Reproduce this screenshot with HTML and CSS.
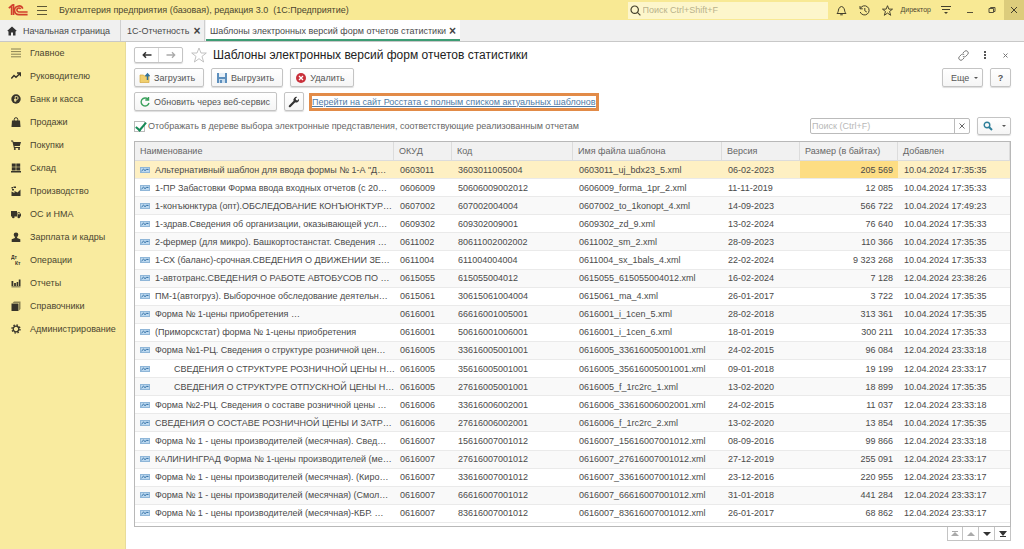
FILE: index.html
```html
<!DOCTYPE html>
<html lang="ru">
<head>
<meta charset="utf-8">
<title>Шаблоны электронных версий форм отчетов статистики</title>
<link rel="stylesheet" href="styles.css">
</head>
<body>
<svg class="sprite" aria-hidden="true">
  <symbol id="doc" viewBox="0 0 10 6"><rect x=".5" y=".5" width="9" height="5" fill="#b9d6ee" stroke="#8fb6d8"/><path d="M1.5 4 3.5 2.2 5 3.6 6.5 2.4H8.5" fill="none" stroke="#2e6da4"/></symbol>
</svg>
<div class="app">
  <header class="topbar">
    <svg class="logo" viewBox="0 0 20 12" fill="none" stroke="#d1402c" stroke-width="1.6"><path d="M.8 4.2 3.6 1.8V11M5.6 11V.8L3.4 1.6"/><path d="M14.8 4.6A4.3 4.3 0 1 0 10.8 10.6H19.6"/><path d="M12.6 5A2 2 0 1 0 10.8 8H19.6"/></svg>
    <button class="plain" aria-label="Меню"><svg width="10" height="10" viewBox="0 0 10 10" stroke="#5d5737" ><path d="M0 1.5H10M0 5.5H10M0 9.5H10"/></svg></button>
    <span class="apptitle">Бухгалтерия предприятия (базовая), редакция 3.0&nbsp; (1С:Предприятие)</span>
    <label class="global"><svg width="11" height="11" viewBox="0 0 11 11" fill="none" stroke="#44402c" stroke-width="1.2"><circle cx="4.7" cy="4.7" r="3.7"/><path d="M7.4 7.4 10.4 10.4"/></svg><input type="text" placeholder="Поиск Ctrl+Shift+F" aria-label="Глобальный поиск"></label>
    <div class="topicons">
      <button class="plain" aria-label="Уведомления"><svg width="11" height="11" viewBox="0 0 11 11" fill="none" stroke="#44402c"><path d="M1 8.5C2.5 7 2.2 5.5 2.8 3.8Q3.6 1.8 5.5 1.5 7.4 1.8 8.2 3.8C8.8 5.5 8.500 7 10 8.500ZM4.200 9.800H6.800"/></svg></button>
      <button class="plain" aria-label="История"><svg width="11" height="11" viewBox="0 0 11 11" fill="none" stroke="#44402c"><path d="M1.300 3.500A4.600 4.600 0 1 1 1.200 7M1 1V3.800H3.800M5.800 3V5.800L7.800 7"/></svg></button>
      <button class="plain" aria-label="Избранное"><svg width="11" height="11" viewBox="0 0 16 16" fill="none" stroke="#44402c" stroke-width="1.400"><path d="M8 1 10 6H15.300L11 9.400 12.600 15 8 11.700 3.400 15 5 9.400.700 6H6Z"/></svg></button>
      <button class="plain user">Директор</button>
      <button class="plain" aria-label="Настройки"><svg width="10" height="10" viewBox="0 0 10 10" stroke="#44402c"><path d="M0 1.500H10M1 4.500H9"/><path d="M3 7H7L5 9Z" fill="#44402c" stroke="none"/></svg></button>
    </div>
    <div class="win">
      <button class="plain" aria-label="Свернуть"><svg width="8" height="8" viewBox="0 0 8 8" stroke="#55503a"><path d="M1 6.500H7"/></svg></button>
      <button class="plain" aria-label="Развернуть"><svg width="8" height="8" viewBox="0 0 8 8" fill="none" stroke="#55503a"><path d="M1 2.500H5.500V6.500H1ZM2.500 2.500V1.500H7V5.500H5.500"/></svg></button>
      <button class="plain close" aria-label="Закрыть"><svg width="8" height="8" viewBox="0 0 8 8" stroke="#44402c"><path d="M1 1 7 7M7 1 1 7"/></svg></button>
    </div>
  </header>
  <nav class="tabs">
    <a class="tab home" href="#"><svg width="10" height="10" viewBox="0 0 10 10" fill="#333"><path d="M5 .5 .3 4.800 1.500 5.400V9.500H4V6.500H6V9.500H8.500V5.400L9.700 4.800Z"/></svg>Начальная страница</a>
    <a class="tab report" href="#">1С-Отчетность<b>×</b></a>
    <a class="tab active" href="#">Шаблоны электронных версий форм отчетов статистики<b>×</b></a>
  </nav>
  <div class="body">
    <nav class="side">
      <a href="#"><svg viewBox="0 0 10 10" stroke="#6b6440" stroke-width=".8"><path d="M0 1H10M0 3.600H10M0 6.200H10M0 8.800H10"/></svg>Главное</a>
      <a href="#"><svg viewBox="0 0 10 10" fill="none" stroke="#37342a" stroke-width="1.500"><path d="M.3 7.500 3 4.500 5 6.300 9 2.500M6 2H9.500V5.300"/></svg>Руководителю</a>
      <a href="#"><svg viewBox="0 0 10 10"><circle cx="5" cy="5" r="4.700" fill="#37342a"/><path d="M4.200 8V2.500H5.600A1.500 1.500 0 0 1 5.600 5.500H3M3 6.700H5.600" fill="none" stroke="#f9eb9f" stroke-width=".9"/></svg>Банк и касса</a>
      <a href="#"><svg viewBox="0 0 10 10" fill="#37342a"><path d="M1 3.500H9L9.500 10H.5Z"/><path d="M3.200 5V2.500Q3.200.7 5 .7T6.800 2.500V5" fill="none" stroke="#37342a"/></svg>Продажи</a>
      <a href="#"><svg viewBox="0 0 10 10" fill="#37342a"><path d="M0 .6H2L2.500 2H10L8.800 6H3.500L3.700 7H9V8H2.900L1.400 1.500H0Z"/><circle cx="3.800" cy="9" r="1"/><circle cx="8" cy="9" r="1"/></svg>Покупки</a>
      <a href="#"><svg viewBox="0 0 10 10" fill="#37342a"><path d="M.8.500H4.700V3.700H.8ZM5.300.500H9.200V3.700H5.300ZM.8 4.300H4.700V7.500H.8ZM5.300 4.300H9.200V7.500H5.300ZM0 8H10V9.500H0Z"/></svg>Склад</a>
      <a href="#"><svg viewBox="0 0 10 10" fill="#37342a"><path d="M.5 10V5.500L3.500 7V5L6.500 6.500 9.500 3.500V10ZM.5 1H2V2.500H.5ZM2.500.5H5V2H2.500ZM1 3H3V4.500H1Z"/></svg>Производство</a>
      <a href="#"><svg viewBox="0 0 10 10" fill="#37342a"><path d="M0 2H6V7.500H0ZM6.500 3.300H8.600L10 5.300V7.500H6.500Z"/><circle cx="2.300" cy="8" r="1.300"/><circle cx="7.800" cy="8" r="1.300"/><path d="M7.200 4H8.300L9 5.200H7.200Z" fill="#f9eb9f"/></svg>ОС и НМА</a>
      <a href="#"><svg viewBox="0 0 10 10" fill="#37342a"><circle cx="5" cy="2.700" r="2.300"/><path d="M3.900 4.500H6.100V6L9.300 7.300V10H.7V7.300L3.900 6Z"/></svg>Зарплата и кадры</a>
      <a href="#"><svg viewBox="0 0 10 10" fill="#37342a"><text x="0" y="4.200" class="dt">Дт</text><text x="4" y="9.800" class="dt">Кт</text></svg>Операции</a>
      <a href="#"><svg viewBox="0 0 10 10" fill="#37342a"><path d="M.5 3H2.300V8H.5ZM3.100 5H4.900V8H3.100ZM5.600 4H7.200V8H5.600ZM7.800 1.500H9.500V8H7.800ZM.5 8.500H9.500V9.300H.5Z"/></svg>Отчеты</a>
      <a href="#"><svg viewBox="0 0 10 10"><path d="M3 .5H9.500V8L8 9.500V2H1.500Z" fill="#8b8355"/><path d="M.5 2.500H7.500V10H.5Z" fill="#37342a"/></svg>Справочники</a>
      <a href="#"><svg viewBox="0 0 10 10" fill="none" stroke="#37342a"><circle cx="5" cy="5" r="2.800" stroke-width="1.300"/><circle cx="5" cy="5" r="4" stroke-width="1.400" stroke-dasharray="1.500 1.640"/></svg>Администрирование</a>
    </nav>
    <main class="main">
      <div class="row head">
        <div class="navpair"><button aria-label="Назад"><svg width="10" height="8" viewBox="0 0 10 8" fill="none" stroke="#333" stroke-width="1.500"><path d="M9.500 4H1.500M4 1.300 1.300 4 4 6.700"/></svg></button><button aria-label="Вперед"><svg width="10" height="8" viewBox="0 0 10 8" fill="none" stroke="#aaa" stroke-width="1.300"><path d="M.5 4H8.500M6 1.300 8.700 4 6 6.700"/></svg></button></div>
        <button class="plain" aria-label="В избранное"><svg width="16" height="16" viewBox="0 0 16 16" fill="none" stroke="#bbb" stroke-width=".9"><path d="M8 1 10 6H15.300L11 9.400 12.600 15 8 11.700 3.400 15 5 9.400.700 6H6Z"/></svg></button>
        <h1>Шаблоны электронных версий форм отчетов статистики</h1>
        <div class="headicons">
          <button class="plain" aria-label="Ссылка"><svg width="11" height="11" viewBox="0 0 11 11" fill="none" stroke="#777"><path d="M5 3 6.500 1.400A2 2 0 0 1 9.600 4.500L7.500 6.500A2 2 0 0 1 4.800 6.400M6 8 4.500 9.600A2 2 0 0 1 1.400 6.500L3.500 4.500A2 2 0 0 1 6.200 4.600"/></svg></button>
          <button class="plain" aria-label="Действия"><svg width="4" height="10" viewBox="0 0 4 10" fill="#555"><path d="M1 1H3V3H1ZM1 4H3V6H1ZM1 7H3V9H1Z"/></svg></button>
          <button class="plain" aria-label="Закрыть форму"><svg width="5" height="5" viewBox="0 0 5 5" stroke="#777"><path d="M.5.5 4.500 4.500M4.500.5.5 4.500"/></svg></button>
        </div>
      </div>
      <div class="row cmds">
        <button class="btn"><svg width="12" height="12" viewBox="0 0 12 12"><path d="M1 3H4.500L5.500 4H10V10.500H1Z" fill="#f0cf6e" stroke="#d2a63f" stroke-width=".7"/><path d="M8.500 8V2.500M6.500 4.200 8.500 1.800 10.500 4.200" fill="none" stroke="#2f7099" stroke-width="1.500"/></svg>Загрузить</button>
        <button class="btn"><svg width="12" height="12" viewBox="0 0 12 12"><path d="M1 1H11V11H1Z" fill="#5d8fbd"/><path d="M3 1H9V5H3Z" fill="#e7f0f8"/><path d="M3 7H9V11H3Z" fill="#c8dced"/><path d="M4 8H6V11H4Z" fill="#5d8fbd"/></svg>Выгрузить</button>
        <button class="btn"><svg width="12" height="12" viewBox="0 0 12 12"><circle cx="6" cy="6" r="5" fill="#c9303b"/><path d="M4 4 8 8M8 4 4 8" stroke="#fff" stroke-width="1.300"/></svg>Удалить</button>
        <span class="grow"></span>
        <button class="btn more">Еще<i></i></button>
        <button class="btn help">?</button>
      </div>
      <div class="row web">
        <button class="btn refresh"><svg width="12" height="12" viewBox="0 0 12 12" fill="none" stroke="#3aa05c" stroke-width="1.400"><path d="M9 3.200A4 4 0 1 0 10 7M9.500 1V4H6.300"/></svg>Обновить через веб-сервис</button>
        <button class="btn tool" aria-label="Настроить"><svg width="12" height="12" viewBox="0 0 12 12"><path d="M1.800 10.200 7 5" stroke="#333" stroke-width="2.200" stroke-linecap="round"/><path d="M9.200 1 7.600 2.600 8 4 9.400 4.400 11 2.800Q11.500 5.300 9.500 6.200T6 5.500 6.200 2 9.200 1Z" fill="#333"/></svg></button>
        <a class="site" href="#">Перейти на сайт Росстата с полным списком актуальных шаблонов</a>
      </div>
      <div class="row filter">
        <label class="check"><input type="checkbox" checked>Отображать в дереве выбора электронные представления, соответствующие реализованным отчетам</label>
        <span class="grow"></span>
        <div class="search"><input type="text" placeholder="Поиск (Ctrl+F)" aria-label="Поиск"><button aria-label="Очистить"><svg width="6" height="6" viewBox="0 0 6 6" stroke="#666"><path d="M.5.5 5.500 5.500M5.500.5.5 5.500"/></svg></button></div>
        <button class="btn find" aria-label="Найти"><svg width="10" height="10" viewBox="0 0 10 10" fill="none" stroke="#2f7f9a" stroke-width="1.400"><circle cx="4" cy="4" r="2.800"/><path d="M6 6 9 9" stroke-width="1.900"/></svg><i></i></button>
      </div>
      <div class="grid">
        <table>
          <colgroup><col><col class="c2"><col class="c3"><col class="c4"><col class="c5"><col class="c6"><col class="c7"></colgroup>
          <thead><tr><th>Наименование</th><th>ОКУД</th><th>Код</th><th>Имя файла шаблона</th><th>Версия</th><th>Размер (в байтах)</th><th>Добавлен</th></tr></thead>
          <tbody>
            <tr class="sel"><td><svg><use href="#doc"/></svg>Альтернативный шаблон для ввода формы № 1-А "Д…</td><td>0603011</td><td>3603011005004</td><td>0603011_uj_bdx23_5.xml</td><td>06-02-2023</td><td>205 569</td><td>10.04.2024 17:35:35</td></tr>
            <tr><td><svg><use href="#doc"/></svg>1-ПР Забастовки Форма ввода входных отчетов (с 20…</td><td>0606009</td><td>50606009002012</td><td>0606009_forma_1pr_2.xml</td><td>11-11-2019</td><td>12 085</td><td>10.04.2024 17:35:33</td></tr>
            <tr><td><svg><use href="#doc"/></svg>1-конъюнктура (опт).ОБСЛЕДОВАНИЕ КОНЪЮНКТУР…</td><td>0607002</td><td>607002004004</td><td>0607002_to_1konopt_4.xml</td><td>14-09-2023</td><td>566 722</td><td>10.04.2024 17:49:23</td></tr>
            <tr><td><svg><use href="#doc"/></svg>1-здрав.Сведения об организации, оказывающей усл…</td><td>0609302</td><td>609302009001</td><td>0609302_zd_9.xml</td><td>13-02-2024</td><td>76 640</td><td>10.04.2024 17:35:33</td></tr>
            <tr><td><svg><use href="#doc"/></svg>2-фермер (для микро). Башкортостанстат. Сведения …</td><td>0611002</td><td>80611002002002</td><td>0611002_sm_2.xml</td><td>28-09-2023</td><td>110 366</td><td>10.04.2024 17:35:35</td></tr>
            <tr><td><svg><use href="#doc"/></svg>1-СХ (баланс)-срочная.СВЕДЕНИЯ О ДВИЖЕНИИ ЗЕ…</td><td>0611004</td><td>611004004004</td><td>0611004_sx_1bals_4.xml</td><td>22-02-2024</td><td>9 323 268</td><td>10.04.2024 17:35:33</td></tr>
            <tr><td><svg><use href="#doc"/></svg>1-автотранс.СВЕДЕНИЯ О РАБОТЕ АВТОБУСОВ ПО …</td><td>0615055</td><td>615055004012</td><td>0615055_615055004012.xml</td><td>16-02-2024</td><td>7 128</td><td>12.04.2024 23:38:26</td></tr>
            <tr><td><svg><use href="#doc"/></svg>ПМ-1(автогруз). Выборочное обследование деятельн…</td><td>0615061</td><td>30615061004004</td><td>0615061_ma_4.xml</td><td>26-01-2017</td><td>3 722</td><td>10.04.2024 17:35:35</td></tr>
            <tr><td><svg><use href="#doc"/></svg>Форма № 1-цены приобретения …</td><td>0616001</td><td>66616001005001</td><td>0616001_i_1cen_5.xml</td><td>28-02-2018</td><td>313 361</td><td>10.04.2024 17:35:35</td></tr>
            <tr><td><svg><use href="#doc"/></svg>(Приморскстат) форма № 1-цены приобретения</td><td>0616001</td><td>50616001006001</td><td>0616001_i_1cen_6.xml</td><td>18-01-2019</td><td>300 211</td><td>10.04.2024 17:35:33</td></tr>
            <tr><td><svg><use href="#doc"/></svg>Форма №1-РЦ. Сведения о структуре розничной цен…</td><td>0616005</td><td>33616005001001</td><td>0616005_33616005001001.xml</td><td>24-02-2015</td><td>96 084</td><td>12.04.2024 23:33:18</td></tr>
            <tr><td class="sub"><svg><use href="#doc"/></svg>СВЕДЕНИЯ О СТРУКТУРЕ РОЗНИЧНОЙ ЦЕНЫ Н…</td><td>0616005</td><td>35616005001001</td><td>0616005_35616005001001.xml</td><td>09-01-2018</td><td>19 199</td><td>12.04.2024 23:33:17</td></tr>
            <tr><td class="sub"><svg><use href="#doc"/></svg>СВЕДЕНИЯ О СТРУКТУРЕ ОТПУСКНОЙ ЦЕНЫ Н…</td><td>0616005</td><td>27616005001001</td><td>0616005_f_1rc2rc_1.xml</td><td>13-02-2020</td><td>18 899</td><td>10.04.2024 17:35:35</td></tr>
            <tr><td><svg><use href="#doc"/></svg>Форма №2-РЦ. Сведения о составе розничной цены …</td><td>0616006</td><td>33616006002001</td><td>0616006_33616006002001.xml</td><td>24-02-2015</td><td>11 037</td><td>12.04.2024 23:33:18</td></tr>
            <tr><td><svg><use href="#doc"/></svg>СВЕДЕНИЯ О СОСТАВЕ РОЗНИЧНОЙ ЦЕНЫ И ЗАТР…</td><td>0616006</td><td>27616006002001</td><td>0616006_f_1rc2rc_2.xml</td><td>13-02-2020</td><td>13 854</td><td>10.04.2024 17:35:35</td></tr>
            <tr><td><svg><use href="#doc"/></svg>Форма № 1 - цены производителей (месячная). Свед…</td><td>0616007</td><td>15616007001012</td><td>0616007_15616007001012.xml</td><td>08-09-2016</td><td>99 866</td><td>12.04.2024 23:33:18</td></tr>
            <tr><td><svg><use href="#doc"/></svg>КАЛИНИНГРАД Форма № 1-цены производителей (ме…</td><td>0616007</td><td>27616007001012</td><td>0616007_27616007001012.xml</td><td>27-12-2019</td><td>255 091</td><td>12.04.2024 23:33:17</td></tr>
            <tr><td><svg><use href="#doc"/></svg>Форма № 1 - цены производителей (месячная). (Киро…</td><td>0616007</td><td>33616007001012</td><td>0616007_33616007001012.xml</td><td>23-12-2016</td><td>220 955</td><td>12.04.2024 23:33:17</td></tr>
            <tr><td><svg><use href="#doc"/></svg>Форма № 1 - цены производителей (месячная) (Смол…</td><td>0616007</td><td>66616007001012</td><td>0616007_66616007001012.xml</td><td>31-01-2018</td><td>441 284</td><td>12.04.2024 23:33:17</td></tr>
            <tr><td><svg><use href="#doc"/></svg>Форма № 1 - цены производителей (месячная)-КБР. …</td><td>0616007</td><td>83616007001012</td><td>0616007_83616007001012.xml</td><td>26-01-2017</td><td>68 862</td><td>12.04.2024 23:33:17</td></tr>
          </tbody>
        </table>
      </div>
      <div class="pager">
        <button aria-label="В начало"><svg width="8" height="6" viewBox="0 0 8 6" fill="#aaa"><path d="M1 0H7V1H1ZM4 1 8 5H0Z"/></svg></button>
        <button aria-label="Вверх"><svg width="8" height="6" viewBox="0 0 8 6" fill="#aaa"><path d="M4 1 8 5H0Z"/></svg></button>
        <button aria-label="Вниз"><svg width="8" height="6" viewBox="0 0 8 6" fill="#333"><path d="M0 1H8L4 5Z"/></svg></button>
        <button aria-label="В конец"><svg width="8" height="6" viewBox="0 0 8 6" fill="#333"><path d="M0 0H8L4 5ZM1 5H7V6H1Z"/></svg></button>
      </div>
    </main>
  </div>
</div>
</body>
</html>
```
FILE: styles.css
```css
* { box-sizing: border-box; }
body { margin: 0; background: #fff; color: #4a4a4a; font: 9px/12px "Liberation Sans", Arial, sans-serif; }
button, input { font: inherit; color: inherit; margin: 0; }
a { color: inherit; text-decoration: none; }
svg { flex: none; display: block; }
.sprite { position: absolute; width: 0; height: 0; }
.plain { border: 0; background: none; padding: 0; display: flex; align-items: center; justify-content: center; }
.app { min-height: 100vh; display: flex; flex-direction: column; }
.grow { flex: 1; }

.topbar { display: flex; align-items: center; height: 20px; background: #f8e994; color: #4b4630; padding-left: 8px; }
.logo { width: 20px; height: 12px; margin-right: 9px; }
.apptitle { margin-left: 12px; white-space: nowrap; }
.global { margin-left: auto; width: 200px; height: 17px; background: #fdf6cb; display: flex; align-items: center; gap: 2px; padding-left: 2px; }
.global input { flex: 1; min-width: 0; border: 0; background: none; padding: 0; }
.global input::placeholder { color: #b9b28b; opacity: 1; }
.topicons { display: flex; align-items: center; gap: 12px; margin: 0 8px; }
.user { font-size: 7px; margin: 0 -2px 0 -4px; }
.win { display: flex; align-self: stretch; }
.win .plain { width: 22px; }
.win .close { background: #dccc7c; width: 20px; margin-left: 1px; }

.tabs { display: flex; height: 22px; background: #f0f0f0; border-bottom: 1px solid #c8c8c8; }
.tab { display: flex; align-items: center; gap: 6px; border-right: 1px solid #cfcfcf; white-space: nowrap; }
.tab b { font-size: 12px; color: #444; }
.home { width: 121px; padding-left: 7px; }
.report { width: 84px; padding-left: 6px; gap: 4px; }
.active { background: #fff; padding: 2px 4px 0 4px; margin-left: 1px; border-bottom: 2px solid #3d9c74; gap: 3px; border-right: 0; }

.body { flex: 1; display: flex; }
.side { width: 126px; background: #f9eb9f; border-right: 1px solid #e8dc9a; display: flex; flex-direction: column; color: #4b4630; }
.side a { height: 23px; display: flex; align-items: center; gap: 9px; padding: 0 0 2px 11px; white-space: nowrap; }
.side svg { width: 10px; height: 10px; }
.dt { font: bold 5px "Liberation Sans", sans-serif; }

.main { flex: 1; min-width: 0; display: flex; flex-direction: column; padding: 4px 13px 8px 8px; }
.row { display: flex; align-items: center; }
.head { height: 18px; gap: 8px; }
.navpair { display: flex; border: 1px solid #c4c4c4; border-radius: 2px; height: 16px; width: 49px; box-shadow: 0 1px 1px #ddd; }
.navpair button { flex: 1; border: 0; background: none; padding: 0; display: flex; align-items: center; justify-content: center; }
.navpair button + button { border-left: 1px solid #d8d8d8; }
h1 { margin: 0 0 0 -2px; font-size: 12px; line-height: 16px; font-weight: normal; color: #222; white-space: nowrap; }
.headicons { margin-left: auto; display: flex; gap: 12px; align-items: center; padding-right: 2px; }
.headicons .plain { min-width: 8px; }
.btn { height: 19px; display: flex; align-items: center; gap: 3px; padding: 0 8px 0 4px; border: 1px solid #c4c4c4; border-radius: 2px; background: linear-gradient(#fff, #f5f5f5); box-shadow: 0 1px 1px #ddd; white-space: nowrap; color: #555; }
.cmds { gap: 7px; margin-top: 4px; }
.btn i { border: 2px solid transparent; border-top-color: #555; border-bottom: 0; }
.more { width: 41px; padding: 0 4px 0 8px; justify-content: space-between; }
.help { width: 21px; padding: 0; justify-content: center; font-weight: bold; }
.web { gap: 7px; margin-top: 5px; }
.refresh { padding-right: 6px; }
.tool { width: 20px; padding: 0; justify-content: center; }
.site { border: 3px solid #e28b48; margin-left: -2px; height: 18px; line-height: 12px; color: #4f7ba6; text-decoration: underline; white-space: nowrap; }
.filter { margin-top: 6px; height: 18px; }
.check { display: flex; align-items: center; gap: 3px; white-space: nowrap; color: #666; }
.check input { appearance: none; width: 11px; height: 11px; border: 1px solid #bbb; display: grid; }
.check input:checked::before { content: ""; width: 4px; height: 9px; margin: -2px 0 0 3px; border: solid #168a56; border-width: 0 2px 2px 0; transform: rotate(40deg); }
.search { width: 160px; height: 16px; display: flex; border: 1px solid #bbb; border-radius: 2px; }
.search input { flex: 1; min-width: 0; border: 0; padding: 0 1px; background: none; }
.search input::placeholder { color: #b8b8b8; opacity: 1; }
.search button { width: 15px; border: 0; border-left: 1px solid #bbb; background: none; padding: 0; display: flex; align-items: center; justify-content: center; }
.find { width: 34px; height: 18px; margin-left: 7px; padding: 0 4px 0 5px; justify-content: space-between; }

.grid { flex: 1; display: grid; margin-top: 6px; border: 1px solid #b8b8b8; padding-bottom: 3px; }
table { width: 100%; height: 100%; table-layout: fixed; border-collapse: separate; border-spacing: 0; }
.c2 { width: 58px; } .c3 { width: 121px; } .c4 { width: 149px; } .c5 { width: 78px; } .c6 { width: 98px; } .c7 { width: 112px; }
th, td { padding: 0 6px; text-align: left; font-weight: normal; white-space: nowrap; border-bottom: 1px solid #eaeaea; }
th { height: 19px; padding: 0 5px; background: #f1f1f1; border-right: 1px solid #dcdcdc; border-bottom-color: #dcdcdc; color: #666; }
td { height: 18px; line-height: 12px; }
td:nth-child(6) { text-align: right; padding-right: 5px; }
td svg { display: inline-block; width: 10px; height: 6px; margin-right: 5px; }
td:first-child { padding: 0 0 0 5px; }
.sub svg { margin-right: 24px; }
tbody tr:nth-child(odd) { background: #f9f9f9; }
tbody tr.sel { background: #fef0c3; }
.sel td:nth-child(6) { background: #fddd83; }
.pager { display: flex; align-self: flex-end; }
.pager button { width: 16px; height: 14px; padding: 0; border: 1px solid #c4c4c4; border-top: 0; border-left-width: 0; background: #fff; display: flex; align-items: center; justify-content: center; }
.pager button:first-child { border-left-width: 1px; }
```
